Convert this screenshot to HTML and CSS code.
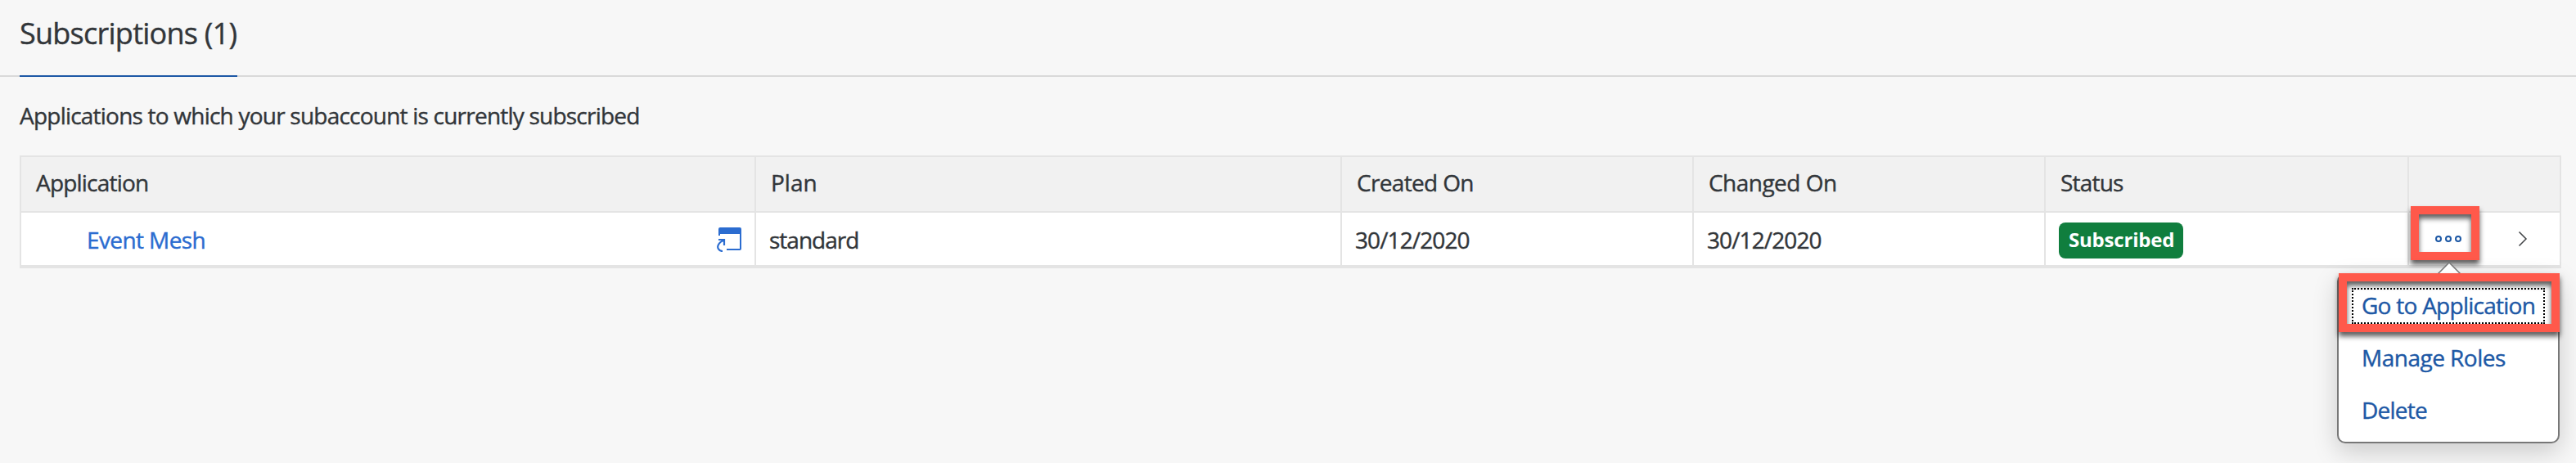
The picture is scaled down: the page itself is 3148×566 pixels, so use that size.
FILE: index.html
```html
<!DOCTYPE html>
<html lang="en">
<head>
<meta charset="utf-8">
<title>Subscriptions</title>
<link rel="stylesheet" href="styles.css">
</head>
<body>
<header class="tabs"><h1 class="tab">Subscriptions (1)</h1></header>
<main class="content">
  <p class="intro">Applications to which your subaccount is currently subscribed</p>
  <section class="table">
    <div class="row head">
      <div class="cell application">Application</div>
      <div class="cell plan">Plan</div>
      <div class="cell created">Created On</div>
      <div class="cell changed">Changed On</div>
      <div class="cell status">Status</div>
      <div class="cell"></div>
    </div>
    <div class="row item">
      <div class="cell name"><a class="link">Event Mesh</a>
        <svg class="launch" width="32" height="32" viewBox="0 0 32 32">
          <path fill="#2b6cd0" d="M4 12V4a2 2 0 0 1 2-2h24a2 2 0 0 1 2 2v24a2 2 0 0 1-2 2H14v-2h16V10H6v2z"/>
          <path fill="none" stroke="#2b6cd0" stroke-width="2.200" d="M9 31C4 31 2 26.500 4 23C5 21 8 18 11 18M4 17H11V24"/>
        </svg>
      </div>
      <div class="cell plan-value">standard</div>
      <div class="cell date">30/12/2020</div>
      <div class="cell date">30/12/2020</div>
      <div class="cell state"><span class="badge">Subscribed</span></div>
      <div class="cell actions">
        <button class="more" aria-label="More actions">
          <svg width="32" height="8" viewBox="0 0 32 8" fill="none" stroke="#1d58a5" stroke-width="2"><circle cx="4" cy="4" r="3"/><circle cx="16" cy="4" r="3"/><circle cx="28" cy="4" r="3"/></svg>
        </button>
        <svg class="chevron" width="12" height="20" viewBox="0 0 12 20"><path d="M1.500 1.500 10 10l-8.500 8.500" fill="none" stroke="#404346" stroke-width="1.500"/></svg>
        <div class="menu">
          <svg class="caret" width="32" height="16" viewBox="0 0 32 16"><path d="M1 16 16 1 31 16" fill="#fff" stroke="#777" stroke-width="1.500"/></svg>
          <a class="option goto">Go to Application</a>
          <a class="option manage">Manage Roles</a>
          <a class="option delete">Delete</a>
          <span class="focus"></span>
          <span class="mark mark-option"></span>
        </div>
        <span class="mark mark-more"></span>
      </div>
    </div>
  </section>
</main>
</body>
</html>
```
FILE: styles.css
```css
* { box-sizing: border-box; }
body {
  margin: 0;
  height: 566px;
  overflow: hidden;
  background: #f7f7f7;
  color: #32363a;
  font: 28px/40px "Open Sans", sans-serif;
  -webkit-text-stroke: 0.4px currentColor;
}
.tabs {
  display: flex;
  height: 94px;
  padding-left: 24px;
  box-shadow: inset 0 -2px #d9d9d9;
}
.tab {
  width: 266px;
  margin: 0;
  padding-top: 21px;
  border-bottom: 2px solid #1d58a5;
  font-size: 36px;
  font-weight: 400;
  letter-spacing: -0.74px;
  white-space: nowrap;
}
.content { padding: 0 18px 0 24px; }
.intro {
  height: 96px;
  margin: 0;
  padding-top: 27px;
  letter-spacing: -0.78px;
}
.table {
  border: 2px solid #e4e4e4;
  border-bottom-width: 4px;
}
.row {
  display: grid;
  grid-template-columns: 898px 716px 430px 430px 444px 184px;
}
.cell {
  display: flex;
  align-items: center;
  border-right: 2px solid #e4e4e4;
  white-space: nowrap;
}
.cell:last-child { border-right: 0; }
.head { height: 68px; background: #f1f1f1; border-bottom: 2px solid #e4e4e4; }
.head .cell { padding: 0 18px 4px; }
.item { height: 64px; background: #fff; }
.item .cell { padding-top: 2px; }
.application { letter-spacing: -0.8px; }
.plan { letter-spacing: 0; }
.created { letter-spacing: -0.66px; }
.changed { letter-spacing: -0.53px; }
.status { letter-spacing: -0.8px; }
.name { justify-content: space-between; padding: 0 16px 0 80px; }
.link { color: #2b6cd0; letter-spacing: -0.6px; }
.launch { margin-bottom: 2px; }
.plan-value { padding-left: 16px; letter-spacing: -1px; }
.date { padding-left: 16px; letter-spacing: -0.9px; }
.state { padding-left: 16px; }
.badge {
  width: 152px;
  height: 44px;
  padding-left: 12px;
  border-radius: 8px;
  background: #107e3e;
  color: #fff;
  font-size: 24px;
  font-weight: 700;
  line-height: 42px;
  letter-spacing: -0.2px;
  -webkit-text-stroke: 0;
}
.item .state { padding-top: 4px; }
.item .actions { position: relative; padding: 0 0 0 32px; }
.more {
  display: flex;
  padding: 0;
  border: 0;
  background: none;
}
.chevron { margin-left: 69px; }
.menu {
  position: absolute;
  top: 74px;
  left: -88px;
  z-index: 1;
  width: 272px;
  height: 208px;
  padding: 5px 0 0 28px;
  border: 2px solid #777;
  border-radius: 10px;
  background: #fff;
  box-shadow: 0 10px 30px rgba(0, 0, 0, 0.18);
}
.option {
  display: block;
  height: 64px;
  line-height: 64px;
  color: #1d58a5;
}
.goto { letter-spacing: -0.74px; }
.manage { letter-spacing: -0.51px; }
.delete { letter-spacing: -0.76px; }
.caret { position: absolute; left: 119px; top: -16px; }
.focus {
  position: absolute;
  top: 16px;
  left: 16px;
  width: 236px;
  height: 44px;
  border: 2px dotted #000;
}
.mark {
  position: absolute;
  border: 10px solid #ff594b;
  filter: drop-shadow(0 5px 3px rgba(0, 0, 0, 0.65));
}
.mark-option { top: -2px; left: 0; width: 270px; height: 72px; }
.mark-more { top: -8px; left: 2px; width: 84px; height: 66px; }
```
